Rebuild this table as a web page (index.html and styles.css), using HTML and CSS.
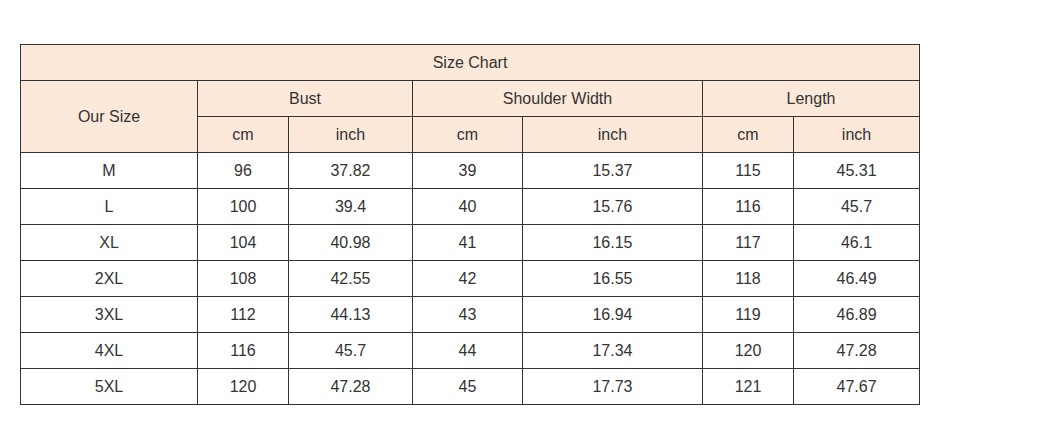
FILE: index.html
```html
<!DOCTYPE html>
<html>
<head>
<meta charset="utf-8">
<link rel="stylesheet" href="styles.css">
</head>
<body>
<table class="chart">
  <colgroup>
    <col class="c1"><col class="c2"><col class="c3"><col class="c4"><col class="c5"><col class="c6"><col class="c7">
  </colgroup>
  <thead>
    <tr class="head"><th colspan="7">Size Chart</th></tr>
    <tr class="head"><th rowspan="2">Our Size</th><th colspan="2">Bust</th><th colspan="2">Shoulder Width</th><th colspan="2">Length</th></tr>
    <tr class="head"><th>cm</th><th>inch</th><th>cm</th><th>inch</th><th>cm</th><th>inch</th></tr>
  </thead>
  <tbody>
    <tr><td>M</td><td>96</td><td>37.82</td><td>39</td><td>15.37</td><td>115</td><td>45.31</td></tr>
    <tr><td>L</td><td>100</td><td>39.4</td><td>40</td><td>15.76</td><td>116</td><td>45.7</td></tr>
    <tr><td>XL</td><td>104</td><td>40.98</td><td>41</td><td>16.15</td><td>117</td><td>46.1</td></tr>
    <tr><td>2XL</td><td>108</td><td>42.55</td><td>42</td><td>16.55</td><td>118</td><td>46.49</td></tr>
    <tr><td>3XL</td><td>112</td><td>44.13</td><td>43</td><td>16.94</td><td>119</td><td>46.89</td></tr>
    <tr><td>4XL</td><td>116</td><td>45.7</td><td>44</td><td>17.34</td><td>120</td><td>47.28</td></tr>
    <tr><td>5XL</td><td>120</td><td>47.28</td><td>45</td><td>17.73</td><td>121</td><td>47.67</td></tr>
  </tbody>
</table>
</body>
</html>
```
FILE: styles.css
```css
html, body {
  margin: 0;
  background: #ffffff;
}
body {
  padding: 44px 0 0 20px;
  font-family: "Liberation Sans", Arial, sans-serif;
  font-size: 16px;
  color: #333333;
}
.chart {
  border-collapse: collapse;
  table-layout: fixed;
  width: 899px;
}
.chart th,
.chart td {
  border: 1px solid #333333;
  height: 36px;
  padding: 0;
  text-align: center;
  vertical-align: middle;
  font-weight: normal;
  box-sizing: border-box;
}
.head th {
  background: #fce9da;
}
.c1 { width: 177px; }
.c2 { width: 91px; }
.c3 { width: 124px; }
.c4 { width: 110px; }
.c5 { width: 180px; }
.c6 { width: 91px; }
.c7 { width: 126px; }
```
